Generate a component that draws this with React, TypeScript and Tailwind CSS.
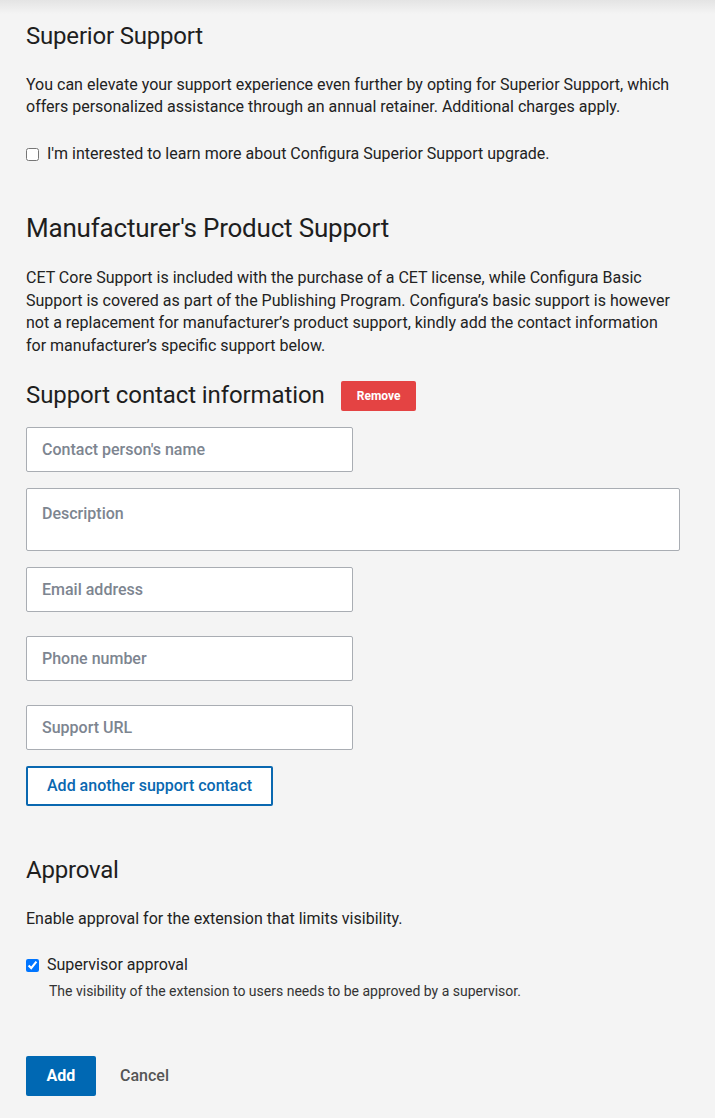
import React from "react";

const body = { fontFamily: "Roboto, 'Liberation Sans', sans-serif" };

function Field({ placeholder, wide, tall }: { placeholder: string; wide?: boolean; tall?: boolean }) {
  return (
    <div
      className={`bg-white border border-[#a9adb3] rounded-[2px] px-[15px] ${
        wide ? "w-[654px]" : "w-[327px]"
      } ${tall ? "h-[63px] pt-[13px]" : "h-[45px] flex items-center"}`}
    >
      <span className="text-[16px] font-medium text-[#7d8590]">{placeholder}</span>
    </div>
  );
}

export default function App() {
  return (
    <div className="min-h-[1118px] bg-[#f4f4f4] text-[#222] relative" style={body}>
      <div className="absolute top-0 left-0 right-0 h-[14px] bg-gradient-to-b from-[#e4e4e4] to-[#f4f4f4]" />
      <div className="relative px-[26px] pt-[20px] pb-[22px]">
        <h2 className="text-[24px] leading-[32px] font-normal tracking-[-0.2px] text-[#1e1e1e]">Superior Support</h2>
        <p className="mt-[22px] text-[16px] leading-[22px] max-w-[660px]">
          You can elevate your support experience even further by opting for Superior Support, which offers
          personalized assistance through an annual retainer. Additional charges apply.
        </p>
        <label className="mt-[25px] flex items-center gap-[8px] text-[16px] leading-[22px]">
          <input type="checkbox" className="w-[13px] h-[13px] m-0" />
          <span>I'm interested to learn more about Configura Superior Support upgrade.</span>
        </label>

        <h2 className="mt-[47px] text-[26px] leading-[32px] font-normal tracking-[-0.2px] text-[#1e1e1e]">
          Manufacturer's Product Support
        </h2>
        <p className="mt-[23px] text-[16px] leading-[22.6px] max-w-[650px]">
          CET Core Support is included with the purchase of a CET license, while Configura Basic Support is covered as
          part of the Publishing Program. Configura’s basic support is however not a replacement for manufacturer’s
          product support, kindly add the contact information for manufacturer’s specific support below.
        </p>

        <div className="mt-[22px] flex items-center gap-[16px]">
          <h3 className="text-[24px] leading-[32px] font-normal tracking-[-0.1px] text-[#1e1e1e]">
            Support contact information
          </h3>
          <button className="mt-[2px] h-[30px] px-[16px] rounded-[2px] bg-[#e44343] text-white text-[12px] font-bold">
            Remove
          </button>
        </div>

        <div className="mt-[16px] flex flex-col">
          <Field placeholder="Contact person's name" />
          <div className="mt-[16px]">
            <Field placeholder="Description" wide tall />
          </div>
          <div className="mt-[16px]">
            <Field placeholder="Email address" />
          </div>
          <div className="mt-[24px]">
            <Field placeholder="Phone number" />
          </div>
          <div className="mt-[24px]">
            <Field placeholder="Support URL" />
          </div>
        </div>

        <button className="mt-[16px] h-[40px] px-[19px] border-2 border-[#0a68b0] rounded-[2px] bg-white text-[#0a68b0] text-[16px] font-medium">
          Add another support contact
        </button>

        <h2 className="mt-[48px] text-[24px] leading-[32px] font-normal tracking-[-0.2px] text-[#1e1e1e]">Approval</h2>
        <p className="mt-[22px] text-[16px] leading-[22px]">Enable approval for the extension that limits visibility.</p>

        <label className="mt-[24px] flex items-center gap-[8px] text-[16px] leading-[22px]">
          <input type="checkbox" defaultChecked className="w-[13px] h-[13px] m-0" />
          <span>Supervisor approval</span>
        </label>
        <p className="mt-[5px] ml-[23px] text-[14px] leading-[20px] text-[#333]">
          The visibility of the extension to users needs to be approved by a supervisor.
        </p>

        <div className="mt-[55px] flex items-center gap-[24px]">
          <button className="h-[40px] w-[70px] rounded-[2px] bg-[#0068b3] text-white text-[16px] font-bold">Add</button>
          <button className="text-[16px] font-medium text-[#555]">Cancel</button>
        </div>
      </div>
    </div>
  );
}
